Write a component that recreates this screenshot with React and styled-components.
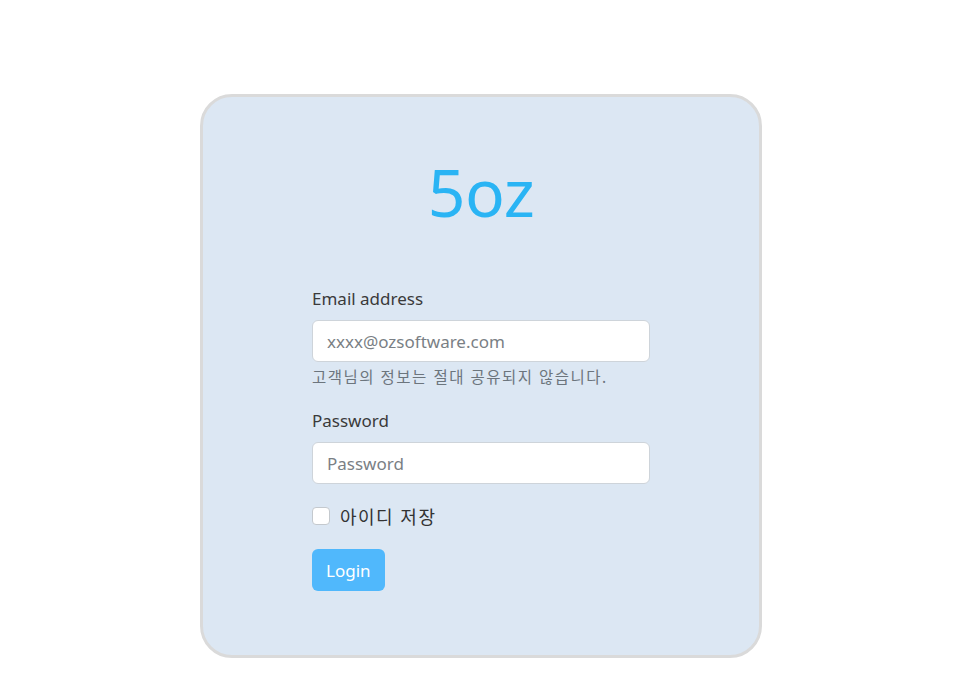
import React from 'react';
import styled, { createGlobalStyle } from 'styled-components';

const GlobalStyle = createGlobalStyle`
	body {
		margin: 0;
		background: #fff;
		font-family: "Noto Sans", "Noto Sans CJK KR", sans-serif;
		color: #333;
	}
`;

function App() {
	return (
		<Page>
			<GlobalStyle />
			<Card>
				<Logo>5oz</Logo>
				<Form onSubmit={e => e.preventDefault()}>
					<Field>
						<Label htmlFor="email">Email address</Label>
						<Input id="email" type="email" placeholder="xxxx@ozsoftware.com" />
						<Help>고객님의 정보는 절대 공유되지 않습니다.</Help>
					</Field>
					<Field>
						<Label htmlFor="pw">Password</Label>
						<Input id="pw" type="password" placeholder="Password" />
					</Field>
					<Check>
						<input type="checkbox" />
						<span>아이디 저장</span>
					</Check>
					<Button type="submit">Login</Button>
				</Form>
			</Card>
		</Page>
	);
};

export default App;

const Page = styled.main`
	padding-top: 94px;
	display: flex;
	justify-content: center;
	padding-left: 6px;
`;

const Card = styled.section`
	box-sizing: border-box;
	width: 562px;
	height: 564px;
	background: #dce7f3;
	border: 3px solid #dadada;
	border-radius: 32px;
	display: flex;
	flex-direction: column;
	align-items: center;
	padding-top: 50px;
`;

const Logo = styled.h1`
	margin: 0;
	font-weight: 400;
	font-size: 66px;
	line-height: 88px;
	letter-spacing: -0.5px;
	color: #2ab4f4;
`;

const Form = styled.form`
	width: 338px;
	margin-top: 52px;
	display: flex;
	flex-direction: column;
	align-items: flex-start;
`;

const Field = styled.div`
	width: 100%;
	margin-bottom: 21px;
	display: flex;
	flex-direction: column;
`;

const Label = styled.label`
	font-size: 17px;
	line-height: 24px;
	color: #3a3a3a;
	margin-bottom: 9px;
`;

const Input = styled.input`
	box-sizing: border-box;
	width: 100%;
	height: 42px;
	padding: 0 14px;
	border: 1px solid #ced4da;
	border-radius: 6px;
	background: #fff;
	font-family: inherit;
	font-size: 17px;
	color: #333;
	outline: none;

	&::placeholder {
		color: #7a7f85;
	}
`;

const Help = styled.small`
	margin-top: 4px;
	font-size: 15.5px;
	line-height: 22px;
	letter-spacing: 1.5px;
	color: #6c757d;
`;

const Check = styled.label`
	display: flex;
	align-items: center;
	gap: 10px;
	font-size: 18px;
	letter-spacing: 1.5px;
	color: #333;
	margin-top: -2px;
	margin-bottom: 20px;

	input {
		margin: 0;
		width: 18px;
		height: 18px;
		appearance: none;
		background: #fff;
		border: 1px solid #c4c9ce;
		border-radius: 4px;
	}
`;

const Button = styled.button`
	height: 42px;
	padding: 0 14px;
	border: none;
	border-radius: 6px;
	background: #50b8fc;
	color: #fff;
	font-family: inherit;
	font-size: 17px;
	cursor: pointer;
`;
